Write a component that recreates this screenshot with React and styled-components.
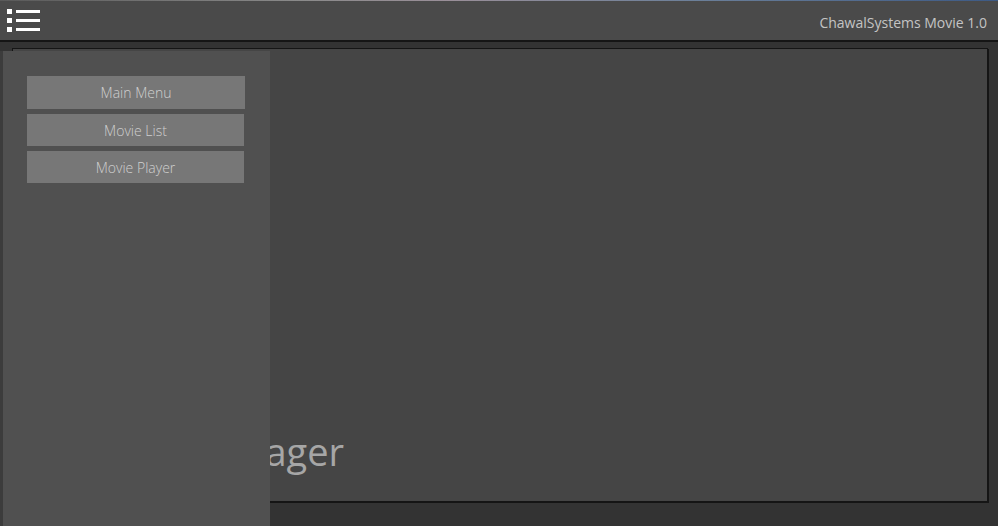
import styled, { createGlobalStyle } from 'styled-components';

const GlobalStyle = createGlobalStyle`
    html, body {
        margin: 0;
        padding: 0;
        background: #333333;
    }
    body {
        font-family: 'Open Sans', 'Noto Sans', sans-serif;
    }
`;

const Window = styled.div`
    position: relative;
    width: 998px;
    height: 526px;
    display: flex;
    flex-direction: column;
    background: #333333;
    overflow: hidden;
`;

const Strip = styled.div`
    height: 1px;
    background: linear-gradient(90deg, #5a5a5a 0%, #8a8a8a 30%, #9a8f99 45%, #6b7f99 70%, #3d5a85 100%);
`;

const Header = styled.header`
    height: 39px;
    display: flex;
    align-items: center;
    justify-content: space-between;
    padding: 0 11px 0 7px;
    background: #4a4a4a;
    border-bottom: 2px solid #151515;
`;

const MenuButton = styled.button`
    display: flex;
    flex-direction: column;
    gap: 4px;
    padding: 0;
    border: none;
    background: none;
    cursor: pointer;
`;

const MenuLine = styled.span`
    display: flex;
    align-items: center;
    gap: 4px;

    &::before {
        content: '';
        width: 5px;
        height: 5px;
        background: #ffffff;
    }
    &::after {
        content: '';
        width: 24px;
        height: 3px;
        background: #ffffff;
    }
`;

const Title = styled.div`
    color: #c4c4c4;
    font-size: 14px;
    margin-top: 3px;
`;

const Main = styled.main`
    flex: 1;
    padding: 6px 10px 24px 12px;
    display: flex;
`;

const Panel = styled.section`
    flex: 1;
    display: flex;
    align-items: flex-end;
    padding: 0 0 31px 57px;
    background: #454545;
    border: 1px solid #151515;
    box-shadow: 1px 1px 0 #151515;
`;

const BigTitle = styled.h1`
    margin: 0;
    font-size: 38px;
    font-weight: 400;
    line-height: 1;
    color: #a6a6a6;
    white-space: nowrap;
`;

const Drawer = styled.nav`
    position: absolute;
    left: 3px;
    top: 51px;
    bottom: 0;
    width: 267px;
    background: #505050;
    padding: 25px 0 0 24px;
    box-sizing: border-box;
    display: flex;
    flex-direction: column;
    gap: 5px;
    box-shadow: -3px 0 0 #3c3c3c;
`;

const NavButton = styled.button`
    width: ${(props) => props.width || 218}px;
    height: ${(props) => props.height || 33}px;
    border: none;
    background: #777777;
    color: #cfcfcf;
    font-family: 'Open Sans', 'Noto Sans', sans-serif;
    font-size: 14px;
    font-weight: 300;
    cursor: pointer;
`;

function App() {
    return (
        <>
            <GlobalStyle />
            <Window>
                <Strip />
                <Header>
                    <MenuButton aria-label="menu">
                        <MenuLine />
                        <MenuLine />
                        <MenuLine />
                    </MenuButton>
                    <Title>ChawalSystems Movie 1.0</Title>
                </Header>
                <Main>
                    <Panel>
                        <BigTitle>Movie Manager</BigTitle>
                    </Panel>
                </Main>
                <Drawer>
                    <NavButton>Main Menu</NavButton>
                    <NavButton width={217} height={32}>Movie List</NavButton>
                    <NavButton width={217} height={32}>Movie Player</NavButton>
                </Drawer>
            </Window>
        </>
    );
}

export default App;
